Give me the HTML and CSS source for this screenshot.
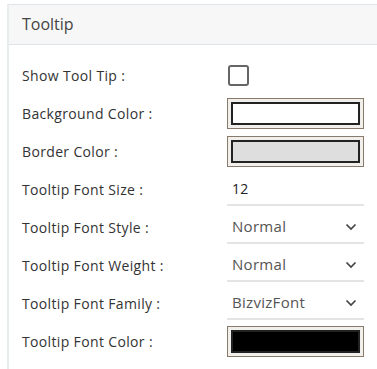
FILE: index.html
```html
<!DOCTYPE html>
<html lang="en">
<head>
  <meta charset="UTF-8" />
  <title>Tooltip</title>
  <link rel="stylesheet" href="styles.css">
</head>
<body>
  <div class="panel">
    <div class="panel-header">Tooltip</div>
    <div class="panel-body">
      <div class="row">
        <label>Show Tool Tip :</label>
        <div class="control"><span class="checkbox"></span></div>
      </div>
      <div class="row">
        <label>Background Color :</label>
        <div class="control"><span class="color"><span class="swatch white"></span></span></div>
      </div>
      <div class="row">
        <label>Border Color :</label>
        <div class="control"><span class="color"><span class="swatch grey"></span></span></div>
      </div>
      <div class="row">
        <label>Tooltip Font Size :</label>
        <div class="control"><div class="field number">12</div></div>
      </div>
      <div class="row">
        <label>Tooltip Font Style :</label>
        <div class="control">
          <div class="field select">Normal
            <svg class="chev" width="12" height="8" viewBox="0 0 12 8"><path d="M1.5 1.5 L6 6 L10.5 1.5" fill="none" stroke="#444" stroke-width="1.7"/></svg>
          </div>
        </div>
      </div>
      <div class="row">
        <label>Tooltip Font Weight :</label>
        <div class="control">
          <div class="field select">Normal
            <svg class="chev" width="12" height="8" viewBox="0 0 12 8"><path d="M1.5 1.5 L6 6 L10.5 1.5" fill="none" stroke="#444" stroke-width="1.7"/></svg>
          </div>
        </div>
      </div>
      <div class="row">
        <label>Tooltip Font Family :</label>
        <div class="control">
          <div class="field select">BizvizFont
            <svg class="chev" width="12" height="8" viewBox="0 0 12 8"><path d="M1.5 1.5 L6 6 L10.5 1.5" fill="none" stroke="#444" stroke-width="1.7"/></svg>
          </div>
        </div>
      </div>
      <div class="row">
        <label>Tooltip Font Color :</label>
        <div class="control"><span class="color"><span class="swatch black"></span></span></div>
      </div>
    </div>
  </div>
</body>
</html>
```

FILE: styles.css
```css
body {
  margin: 0;
  font-family: "Open Sans", Arial, sans-serif;
  background: #fff;
  color: #333;
}
.panel {
  box-sizing: border-box;
  margin: 4px 0 0 7px;
  border-left: 2px solid #e8edf0;
  border-top: 1px solid #dfe4e8;
  height: 365px;
}
.panel-header {
  height: 39px;
  line-height: 38px;
  background: #f7f7f7;
  border-bottom: 1px solid #dfe4e8;
  padding-left: 13px;
  font-size: 16px;
  color: #444;
}
.panel-body {
  padding: 11px 0 0 13px;
}
.row {
  display: flex;
  align-items: center;
  height: 38px;
}
.row label {
  width: 205px;
  font-size: 14px;
  letter-spacing: 0.35px;
  color: #333;
}
.control {
  width: 137px;
}
.checkbox {
  display: block;
  width: 17px;
  height: 17px;
  margin-left: 1px;
  border: 2px solid #666;
  border-radius: 3px;
}
.color {
  display: block;
  height: 23px;
  padding: 3px;
  border: 1px solid #8a7a6c;
  background: #f1efec;
}
.swatch {
  display: block;
  height: 19px;
  border: 2px solid #222;
}
.swatch.white { background: #fff; }
.swatch.grey { background: #dedede; }
.swatch.black { background: #000; }
.field {
  height: 30px;
  line-height: 29px;
  border-bottom: 2px solid #e4e4e4;
  padding-left: 5px;
  font-size: 15px;
  letter-spacing: 0.3px;
  margin-top: 1px;
}
.number {
  color: #222;
  font-size: 14px;
}
.select {
  display: flex;
  justify-content: space-between;
  align-items: center;
  color: #555;
  padding-right: 7px;
}
```
